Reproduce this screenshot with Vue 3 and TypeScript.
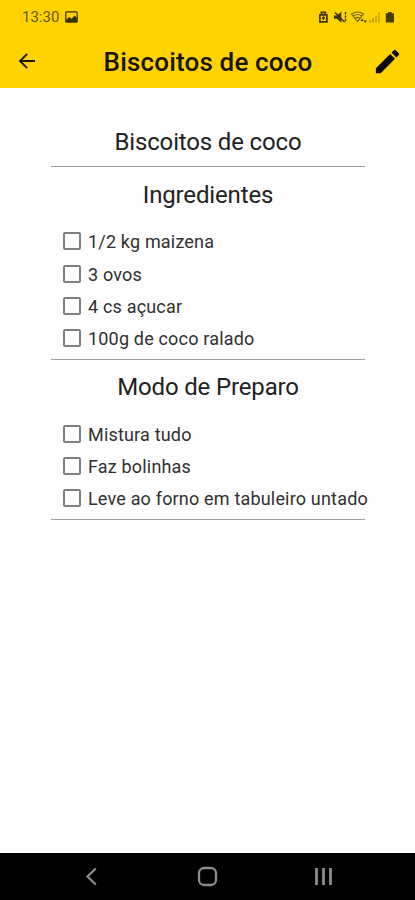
<script setup lang="ts">
import { ref } from 'vue'

interface Item {
  text: string
  done: boolean
}

interface Section {
  title: string
  items: Item[]
}

const recipe = 'Biscoitos de coco'

const toItems = (texts: string[]): Item[] => texts.map((text) => ({ text, done: false }))

const sections = ref<Section[]>([
  {
    title: 'Ingredientes',
    items: toItems(['1/2 kg maizena', '3 ovos', '4 cs açucar', '100g de coco ralado']),
  },
  {
    title: 'Modo de Preparo',
    items: toItems(['Mistura tudo', 'Faz bolinhas', 'Leve ao forno em tabuleiro untado']),
  },
])
</script>

<template>
  <div class="screen">
    <header class="top">
      <div class="status">
        <span class="clock">13:30</span>
        <svg class="photo" width="13" height="12" viewBox="0 0 13 12">
          <rect x="0.8" y="0.8" width="11.4" height="10.4" rx="1" fill="none" stroke="#3a3000" stroke-width="1.3" />
          <path d="M1 9l3.2-3 2.4 1.7L9.5 4.6 12 7v4H1z" fill="#3a3000" />
        </svg>
        <svg class="indicators" width="80" height="16" viewBox="0 0 80 16">
          <g fill="none" stroke="#403600">
            <path d="M0.9 12.8V5.8h7v7zM2.4 5.4V3.3h4v2.1" stroke-width="1.7" />
            <path d="M2.8 9.6l1.6-1.8L6 9.6M4.4 8.5V11" stroke-width="1.2" />
            <path d="M16 3.5l9.5 9.5" stroke-width="1.5" />
            <path d="M26.5 3v10.5" stroke-width="1.4" stroke-dasharray="2.4 1" />
          </g>
          <path d="M15 6.5h2.8l4.5-3.8v11l-4.5-4H15z" fill="#403600" />
          <g fill="none" stroke="#766300" stroke-width="1.2">
            <path d="M32.5 5q6-4 12 0l-6 7.5zM34.3 7q4.2-3 8.4 0M36.2 9.2q2.3-1.7 4.8 0" />
          </g>
          <path d="M41.5 12l1.6-2.6L44.7 12zM44.7 11.5h3.2l-1.6 2.4z" fill="#403600" />
          <path d="M51 13.5v-2M54 13.5v-4" stroke="#a08700" stroke-width="1.4" />
          <path d="M57 13.5v-7M60 13.5V3" stroke="#c8a600" stroke-width="1.6" />
          <path d="M66.8 4.3h2.4V3h3.4v1.3H75v9.2h-8.2z" fill="#4a3f00" />
        </svg>
      </div>
      <div class="bar">
        <button class="icon back" aria-label="Voltar">
          <svg width="18" height="18" viewBox="0 0 18 18">
            <path d="M17 9H2M9.2 1.8L2 9l7.2 7.2" fill="none" stroke="#171300" stroke-width="1.8" />
          </svg>
        </button>
        <h1 class="title">{{ recipe }}</h1>
        <button class="icon edit" aria-label="Editar">
          <svg width="31" height="31" viewBox="0 0 24 24">
            <path
              d="M3 17.25V21h3.75L17.81 9.94l-3.75-3.75L3 17.25zM20.71 7.04a1 1 0 0 0 0-1.41l-2.34-2.34a1 1 0 0 0-1.41 0l-1.83 1.83 3.75 3.75 1.83-1.83z"
              fill="#080700"
            />
          </svg>
        </button>
      </div>
    </header>

    <main class="content">
      <h2 class="heading name">{{ recipe }}</h2>
      <section v-for="section in sections" :key="section.title" class="section">
        <h2 class="heading">{{ section.title }}</h2>
        <label v-for="item in section.items" :key="item.text" class="row">
          <input v-model="item.done" type="checkbox" class="box" />
          <span class="label">{{ item.text }}</span>
        </label>
      </section>
    </main>

    <nav class="nav">
      <svg width="415" height="47" viewBox="0 0 415 47" fill="none" stroke="#8c8c8c">
        <path d="M95.7 15.5L87.5 23.5l8.2 8" stroke-width="2.3" />
        <rect x="199" y="15" width="17" height="17" rx="5" stroke-width="2.3" />
        <path d="M316.5 15v17M323.5 15v17M330.5 15v17" stroke-width="2.8" />
      </svg>
    </nav>
  </div>
</template>

<style>
body {
  margin: 0;
  background: #fff;
}
</style>

<style scoped>
.screen {
  display: flex;
  flex-direction: column;
  width: 415px;
  height: 900px;
  overflow: hidden;
  background: #fefefe;
  color: #222;
  font-family: Roboto, 'Liberation Sans', sans-serif;
}

.top {
  flex: none;
  box-sizing: border-box;
  height: 88px;
  background: #ffd300;
}

.status {
  display: flex;
  align-items: center;
  height: 34px;
  padding: 0 16px 0 22px;
}

.clock {
  width: 43px;
  color: #665500;
  font-size: 15px;
  line-height: 34px;
}

.indicators {
  margin-left: auto;
}

.bar {
  display: flex;
  align-items: center;
  height: 54px;
  padding: 0 12px 0 18px;
}

.icon {
  display: flex;
  flex: none;
  padding: 0;
  border: 0;
  background: none;
}

.title {
  flex: 1;
  margin: 2px 0 0 8px;
  color: #171300;
  font-size: 26px;
  font-weight: 500;
  line-height: 36px;
  letter-spacing: 0.17px;
  text-align: center;
  white-space: nowrap;
}

.content {
  flex: 1;
  padding: 54px 50px 0 51px;
}

.heading {
  margin: 0;
  font-size: 24px;
  font-weight: 400;
  line-height: 30px;
  letter-spacing: -0.15px;
  text-align: center;
}

.name,
.section {
  border-bottom: 1px solid #a0a0a0;
}

.name {
  height: 24px;
  line-height: 1px;
}

.section {
  box-sizing: border-box;
  height: 193px;
  padding-top: 13px;
}

.section:last-child {
  height: 160px;
}

.section .heading {
  margin-bottom: 15.4px;
}

.section:last-child .heading {
  margin: -1px 0 15.6px;
}

.row {
  display: flex;
  align-items: center;
  height: 32.2px;
  padding-left: 12px;
  white-space: nowrap;
}

.box {
  appearance: none;
  flex: none;
  box-sizing: border-box;
  width: 18px;
  height: 18px;
  margin: 0 7px 0 0;
  border: 2px solid #808080;
  border-radius: 2px;
  background: #fff;
}

.box:checked {
  background: #808080;
}

.label {
  padding-top: 1px;
  color: #303030;
  font-size: 18px;
  letter-spacing: 0.18px;
}

.nav {
  flex: none;
  height: 47px;
  background: #000;
}

.nav svg {
  display: block;
}
</style>
